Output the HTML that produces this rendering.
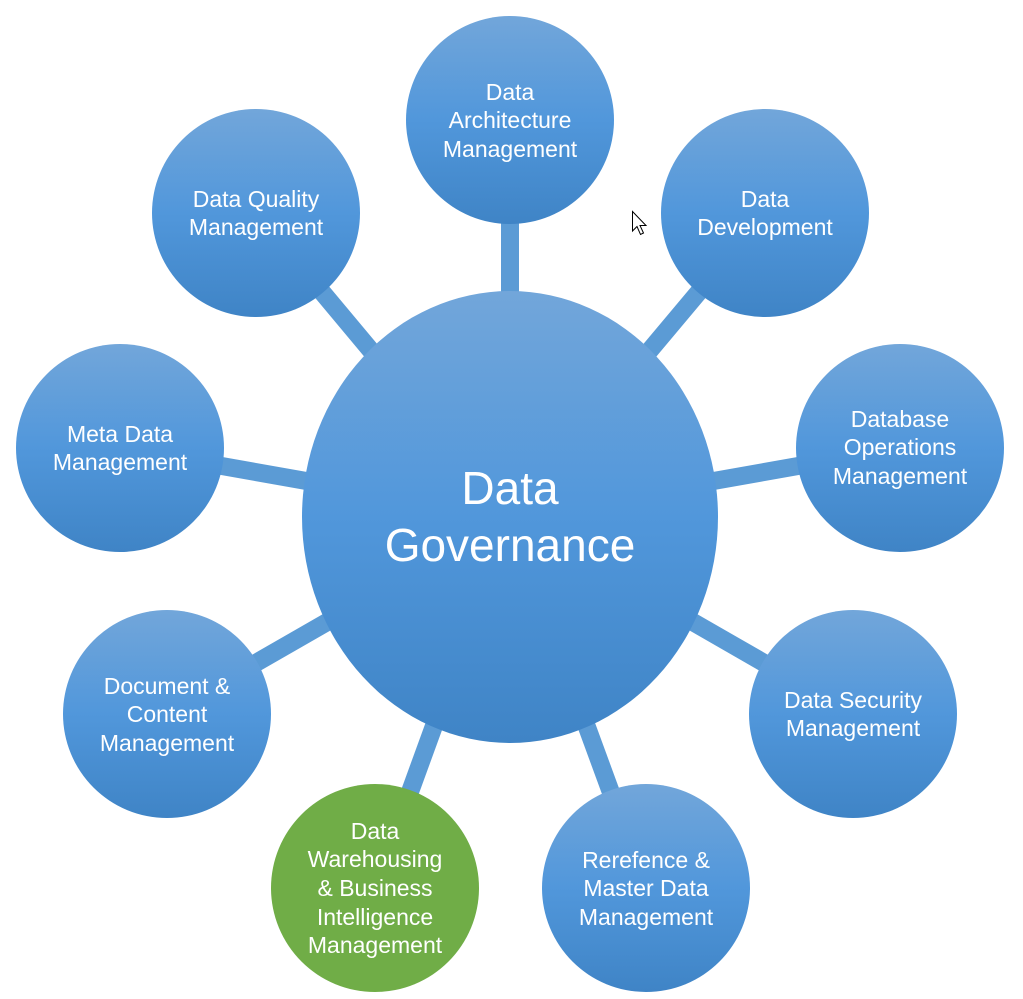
<!DOCTYPE html>
<html><head><meta charset="utf-8"><style>
html,body{margin:0;padding:0;background:#fff;width:1023px;height:999px;overflow:hidden}
svg text{font-family:"Liberation Sans",sans-serif;fill:#fff;text-anchor:middle}
</style></head><body>
<svg width="1023" height="999" viewBox="0 0 1023 999" xmlns="http://www.w3.org/2000/svg">
<defs>
<linearGradient id="g" x1="0" y1="0" x2="0" y2="1">
<stop offset="0" stop-color="#72a6da"/><stop offset="0.5" stop-color="#5197db"/><stop offset="1" stop-color="#3f84c6"/>
</linearGradient>
</defs>
<g stroke="#5b9bd5" stroke-width="18">
<line x1="510" y1="517" x2="510" y2="120"/>
<line x1="510" y1="517" x2="765" y2="213"/>
<line x1="510" y1="517" x2="900" y2="448"/>
<line x1="510" y1="517" x2="853" y2="714"/>
<line x1="510" y1="517" x2="646" y2="888"/>
<line x1="510" y1="517" x2="375" y2="888"/>
<line x1="510" y1="517" x2="167" y2="714"/>
<line x1="510" y1="517" x2="120" y2="448"/>
<line x1="510" y1="517" x2="256" y2="213"/>
</g>
<ellipse cx="510" cy="517" rx="208" ry="226" fill="url(#g)"/>
<circle cx="510" cy="120" r="104" fill="url(#g)"/>
<circle cx="765" cy="213" r="104" fill="url(#g)"/>
<circle cx="900" cy="448" r="104" fill="url(#g)"/>
<circle cx="853" cy="714" r="104" fill="url(#g)"/>
<circle cx="646" cy="888" r="104" fill="url(#g)"/>
<circle cx="375" cy="888" r="104" fill="#70ad47"/>
<circle cx="167" cy="714" r="104" fill="url(#g)"/>
<circle cx="120" cy="448" r="104" fill="url(#g)"/>
<circle cx="256" cy="213" r="104" fill="url(#g)"/>
<g font-size="23">
<text x="510" y="100">Data</text><text x="510" y="128">Architecture</text><text x="510" y="157">Management</text>
<text x="765" y="207">Data</text><text x="765" y="235">Development</text>
<text x="900" y="427">Database</text><text x="900" y="455">Operations</text><text x="900" y="484">Management</text>
<text x="853" y="708">Data Security</text><text x="853" y="736">Management</text>
<text x="646" y="868">Rerefence &amp;</text><text x="646" y="896">Master Data</text><text x="646" y="925">Management</text>
<text x="375" y="839">Data</text><text x="375" y="867">Warehousing</text><text x="375" y="896">&amp; Business</text><text x="375" y="925">Intelligence</text><text x="375" y="953">Management</text>
<text x="167" y="694">Document &amp;</text><text x="167" y="722">Content</text><text x="167" y="751">Management</text>
<text x="120" y="442">Meta Data</text><text x="120" y="470">Management</text>
<text x="256" y="207">Data Quality</text><text x="256" y="235">Management</text>
</g>
<g font-size="46">
<text x="510" y="504">Data</text><text x="510" y="561">Governance</text>
</g>
<path d="M632.5 211.5 L632.5 231 L637 226.5 L640.5 234.5 L643.5 233 L640 225.5 L646 225.5 Z" fill="#fff" stroke="#000" stroke-width="1"/>
</svg>
</body></html>
